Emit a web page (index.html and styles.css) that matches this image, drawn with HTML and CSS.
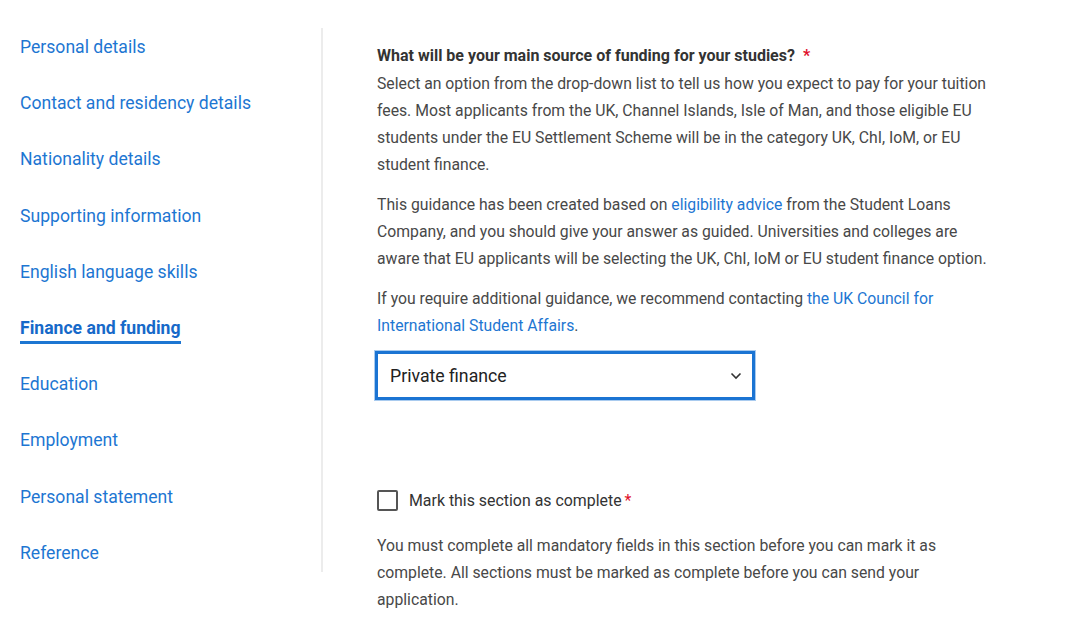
FILE: index.html
```html
<!DOCTYPE html>
<html lang="en">
<head>
<meta charset="utf-8">
<title>Finance and funding</title>
<link rel="stylesheet" href="styles.css">
</head>
<body>
<div class="page">
  <nav class="sidebar">
    <ul class="nav">
      <li><a href="#">Personal details</a></li>
      <li><a href="#">Contact and residency details</a></li>
      <li><a href="#">Nationality details</a></li>
      <li><a href="#">Supporting information</a></li>
      <li><a href="#">English language skills</a></li>
      <li><a href="#" class="active">Finance and funding</a></li>
      <li><a href="#">Education</a></li>
      <li><a href="#">Employment</a></li>
      <li><a href="#">Personal statement</a></li>
      <li><a href="#">Reference</a></li>
    </ul>
  </nav>
  <main class="main">
    <div class="question">What will be your main source of funding for your studies? <span class="req">*</span></div>
    <p class="para first">Select an option from the drop-down list to tell us how you expect to pay for your tuition fees. Most applicants from the UK, Channel Islands, Isle of Man, and those eligible EU students under the EU Settlement Scheme will be in the category UK, ChI, IoM, or EU student finance.</p>
    <p class="para">This guidance has been created based on <a href="#">eligibility advice</a> from the Student Loans Company, and you should give your answer as guided. Universities and colleges are aware that EU applicants will be selecting the UK, ChI, IoM or EU student finance option.</p>
    <p class="para">If you require additional guidance, we recommend contacting <a href="#">the UK Council for International Student Affairs</a>.</p>
    <div class="select">
      <span class="select-value">Private finance</span>
      <svg class="chevron" width="12" height="8" viewBox="0 0 12 8"><path d="M1.5 1.5 L6 6 L10.5 1.5" fill="none" stroke="#333" stroke-width="1.6"/></svg>
    </div>
    <label class="complete">
      <span class="box"></span>
      <span class="complete-text">Mark this section as complete<span class="req">*</span></span>
    </label>
    <p class="para note">You must complete all mandatory fields in this section before you can mark it as complete. All sections must be marked as complete before you can send your application.</p>
  </main>
</div>
</body>
</html>
```
FILE: styles.css
```css
html, body {
  margin: 0;
  padding: 0;
  background: #fff;
}
body {
  font-family: Roboto, "Liberation Sans", Arial, sans-serif;
  color: #444;
}
.page {
  display: flex;
  align-items: flex-start;
}
.sidebar {
  margin-top: 28px;
  height: 544px;
  padding: 7px 0 0 20px;
  box-sizing: border-box;
  border-right: 2px solid #ececec;
  flex-shrink: 0;
  width: 323px;
}
.nav {
  list-style: none;
  margin: 0;
  padding: 0;
}
.nav li {
  margin: 0 0 32.2px 0;
  line-height: 24px;
  height: 24px;
}
.nav a {
  font-size: 17.6px;
  color: #1d76d2;
  text-decoration: none;
}
.nav a.active {
  font-weight: 700;
  color: #1669c9;
  padding-bottom: 3px;
  border-bottom: 3px solid #1d76d2;
}
.main {
  margin-left: 54px;
  padding-top: 42px;
  width: 625px;
}
.question {
  font-size: 16px;
  font-weight: 700;
  color: #333;
  line-height: 27px;
}
.req {
  color: #e0102c;
  margin-left: 3px;
}
.question .req {
  margin-left: 4px;
}
.para {
  margin: 13px 0 0 0;
  font-size: 15.75px;
  line-height: 27px;
  color: #484848;
}
.para.first {
  margin-top: 1px;
}
.para a {
  color: #1d76d2;
  text-decoration: none;
}
.select {
  margin: 12px 0 0 -2px;
  width: 380px;
  height: 49px;
  box-sizing: border-box;
  border: 3px solid #1b74d3;
  box-shadow: 0 0 0 1px #a9cbef;
  display: flex;
  align-items: center;
  justify-content: space-between;
  padding: 0 10px 0 12px;
}
.select-value {
  font-size: 17.7px;
  color: #222;
}
.chevron {
  display: block;
}
.complete {
  display: flex;
  align-items: center;
  margin-top: 90px;
  height: 21px;
}
.box {
  width: 21px;
  height: 21px;
  box-sizing: border-box;
  border: 2px solid #555;
  border-radius: 2px;
  margin-right: 11px;
}
.complete-text {
  font-size: 15.9px;
  color: #333;
}
.note {
  margin-top: 21px;
}
```
